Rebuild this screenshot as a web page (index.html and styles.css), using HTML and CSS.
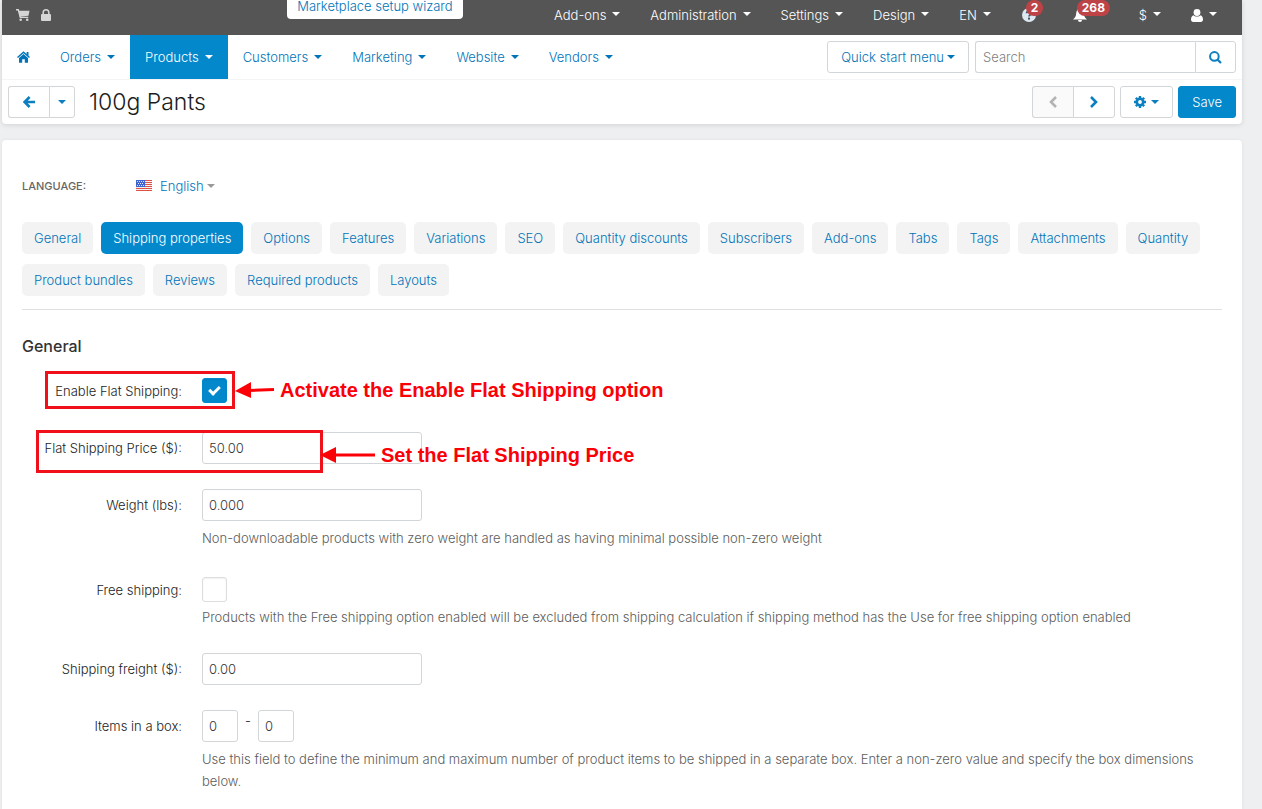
FILE: index.html
```html
<!DOCTYPE html>
<html lang="en">
<head>
<meta charset="utf-8">
<title>100g Pants</title>
<link rel="stylesheet" href="styles.css">
</head>
<body>
<div class="page">
  <header class="header">
    <div class="topbar">
      <a class="topbar-icon" href="#" aria-label="Storefront"><svg width="14" height="12" viewBox="0 0 14 12"><path d="M0 .8h2.300l2 7.600h8" fill="none" stroke="currentColor" stroke-width="1.400"/><path d="M2.500 1.800h11l-1 5-8.700.9z" fill="currentColor"/><circle cx="4.700" cy="10.700" r="1.300" fill="currentColor"/><circle cx="11.200" cy="10.700" r="1.300" fill="currentColor"/></svg></a>
      <a class="topbar-icon" href="#" aria-label="Store access"><svg width="10" height="12" viewBox="0 0 10 12"><path d="M2.200 6V3.600a2.800 2.800 0 0 1 5.600 0V6" fill="none" stroke="currentColor" stroke-width="1.500"/><rect x="0" y="5" width="10" height="7" rx="1" fill="currentColor"/></svg></a>
      <a class="wizard" href="#">Marketplace setup wizard</a>
      <nav class="topmenu" aria-label="Administration">
        <a href="#">Add-ons<span class="caret"></span></a>
        <a href="#">Administration<span class="caret"></span></a>
        <a href="#">Settings<span class="caret"></span></a>
        <a href="#">Design<span class="caret"></span></a>
        <a href="#">EN<span class="caret"></span></a>
        <a class="alerts help" href="#" aria-label="Help"><svg width="14" height="14" viewBox="0 0 14 14"><circle cx="7" cy="7" r="7" fill="#dce9f2"/><path d="M4.600 5.200C4.700 2.600 9.400 2.700 9.300 5.200 9.200 6.700 7.100 6.700 7 8.500" fill="none" stroke="#456" stroke-width="1.800"/><rect x="6" y="9.600" width="2" height="2" fill="#456"/></svg><span class="badge">2</span></a>
        <a class="alerts bell" href="#" aria-label="Notifications"><svg width="14" height="14" viewBox="0 0 14 14"><path d="M7 0C3.500 1 3.400 4 3 7c-.3 2-1.600 3-3 4.500h14C12.600 10 11.300 9 11 7 10.600 4 10.500 1 7 0zM5 12a2 2 0 0 0 4 0z" fill="currentColor"/></svg><span class="badge">268</span></a>
        <a href="#">$<span class="caret"></span></a>
        <a href="#" aria-label="Account"><svg width="12" height="13" viewBox="0 0 12 13"><circle cx="6" cy="3.500" r="3.400" fill="currentColor"/><path d="M2.300 6.300C.7 7 0 8.600 0 10.600 0 12.200.9 13 2.200 13h7.600c1.300 0 2.200-.8 2.200-2.400 0-2-.7-3.600-2.300-4.300C8 8 4 8 2.300 6.300z" fill="currentColor"/></svg><span class="caret"></span></a>
      </nav>
    </div>
    <div class="mainbar">
      <nav class="mainmenu" aria-label="Main">
        <a href="#" aria-label="Home"><svg width="13" height="12" viewBox="0 0 13 12"><path d="M.5 6.500L6.500 1.200l6 5.300" fill="none" stroke="currentColor" stroke-width="1.400"/><path d="M9.600 1h1.900v4L9.600 3.300zM2 7l4.500-4L11 7v4.800H7.800V8.300H5.200v3.500H2z" fill="currentColor"/></svg></a>
        <a href="#">Orders<span class="caret"></span></a>
        <a class="active" href="#">Products<span class="caret"></span></a>
        <a href="#">Customers<span class="caret"></span></a>
        <a href="#">Marketing<span class="caret"></span></a>
        <a href="#">Website<span class="caret"></span></a>
        <a href="#">Vendors<span class="caret"></span></a>
      </nav>
      <button class="btn quick" type="button">Quick start menu<span class="caret"></span></button>
      <form class="search">
        <input type="text" placeholder="Search" aria-label="Search">
        <button class="btn" type="button" aria-label="Find"><svg width="13" height="13" viewBox="0 0 13 13"><circle cx="5.400" cy="5.400" r="4.300" fill="none" stroke="currentColor" stroke-width="2"/><path d="M8.500 8.500l3.500 3.500" stroke="currentColor" stroke-width="2.200"/></svg></button>
      </form>
    </div>
    <div class="titlebar">
      <div class="group">
        <button class="btn wide" type="button" aria-label="Back"><svg width="12" height="12" viewBox="0 0 12 12"><path d="M6.600 1L1.600 6l5 5M2 6h10" fill="none" stroke="currentColor" stroke-width="2.600"/></svg></button>
        <button class="btn narrow" type="button" aria-label="Back options"><span class="caret"></span></button>
      </div>
      <h1>100g Pants</h1>
      <div class="actions">
        <div class="group">
          <button class="btn wide" type="button" aria-label="Previous" disabled><svg width="10" height="12" viewBox="0 0 10 12"><path d="M8 1L3 6l5 5" fill="none" stroke="currentColor" stroke-width="2.600"/></svg></button>
          <button class="btn next" type="button" aria-label="Next"><svg width="10" height="12" viewBox="0 0 10 12"><path d="M2 1l5 5-5 5" fill="none" stroke="currentColor" stroke-width="2.600"/></svg></button>
        </div>
        <button class="btn gear" type="button" aria-label="Tools"><svg width="12" height="12" viewBox="0 0 12 12"><circle cx="6" cy="6" r="3.200" fill="none" stroke="currentColor" stroke-width="2.600"/><path d="M6 0v2M6 10v2M0 6h2M10 6h2M1.800 1.800l1.400 1.400M8.800 8.800l1.400 1.400M1.800 10.200l1.400-1.400M8.800 3.200l1.400-1.400" stroke="currentColor" stroke-width="2.400"/></svg><span class="caret"></span></button>
        <button class="btn primary" type="submit" form="product">Save</button>
      </div>
    </div>
  </header>

  <main class="card">
    <div class="language">
      <span class="language-label">Language:</span>
      <button class="language-pick" type="button">
        <svg class="flag" width="16" height="12" viewBox="0 0 16 12" shape-rendering="crispEdges"><rect width="16" height="11" fill="#f6f1f1"/><path d="M0 0h16v1H0zM0 2h16v1H0zM0 4h16v1H0zM0 6h16v1H0zM0 8h16v1H0zM0 10h16v1H0z" fill="#dd5146"/><rect width="9" height="7" fill="#3f63d2"/><path d="M1 1h1v1H1zM3 1h1v1H3zM5 1h1v1H5zM7 1h1v1H7zM2 3h1v1H2zM4 3h1v1H4zM6 3h1v1H6zM1 5h1v1H1zM3 5h1v1H3zM5 5h1v1H5zM7 5h1v1H7z" fill="#dfe7fb"/></svg>
        English<span class="caret"></span>
      </button>
    </div>
    <nav class="tabs" aria-label="Product sections">
      <a href="#">General</a>
      <a class="active" href="#">Shipping properties</a>
      <a href="#">Options</a>
      <a href="#">Features</a>
      <a href="#">Variations</a>
      <a href="#">SEO</a>
      <a href="#">Quantity discounts</a>
      <a href="#">Subscribers</a>
      <a href="#">Add-ons</a>
      <a href="#">Tabs</a>
      <a href="#">Tags</a>
      <a href="#">Attachments</a>
      <a href="#">Quantity</a>
      <a href="#">Product bundles</a>
      <a href="#">Reviews</a>
      <a href="#">Required products</a>
      <a href="#">Layouts</a>
    </nav>
    <h2>General</h2>
    <form class="form" id="product">
      <div class="row">
        <label for="flat">Enable Flat Shipping:</label>
        <div class="field"><input class="check" type="checkbox" id="flat" checked></div>
        <div class="mark mark-flat"></div>
        <div class="note note-flat"><svg width="40" height="16" viewBox="0 0 40 16"><path d="M14 8.500L39 7.500" stroke="#fb0007" stroke-width="3"/><path d="M0 9L16 0v16z" fill="#fb0007"/></svg>Activate the Enable Flat Shipping option</div>
      </div>
      <div class="row">
        <label for="price">Flat Shipping Price ($):</label>
        <div class="field"><input class="text" type="text" id="price" value="50.00"></div>
        <div class="mark mark-price"></div>
        <div class="note note-price"><svg width="56" height="16" viewBox="0 0 56 16"><path d="M14 8H55" stroke="#fb0007" stroke-width="3"/><path d="M0 8L16 0v16z" fill="#fb0007"/></svg>Set the Flat Shipping Price</div>
      </div>
      <div class="row">
        <label for="weight">Weight (lbs):</label>
        <div class="field"><input class="text" type="text" id="weight" value="0.000"><p class="hint">Non-downloadable products with zero weight are handled as having minimal possible non-zero weight</p></div>
      </div>
      <div class="row">
        <label for="free">Free shipping:</label>
        <div class="field"><input class="check" type="checkbox" id="free"><p class="hint">Products with the Free shipping option enabled will be excluded from shipping calculation if shipping method has the Use for free shipping option enabled</p></div>
      </div>
      <div class="row">
        <label for="freight">Shipping freight ($):</label>
        <div class="field"><input class="text" type="text" id="freight" value="0.00"></div>
      </div>
      <div class="row">
        <label for="min">Items in a box:</label>
        <div class="field">
          <div class="range"><input class="text small" type="text" id="min" value="0"><span>-</span><input class="text small" type="text" value="0" aria-label="Maximum items in a box"></div>
          <p class="hint">Use this field to define the minimum and maximum number of product items to be shipped in a separate box. Enter a non-zero value and specify the box dimensions below.</p>
        </div>
      </div>
    </form>
  </main>
</div>
</body>
</html>
```

FILE: styles.css
```css
* {
  box-sizing: border-box;
}

body {
  margin: 0;
  background: #edeff1;
  color: #1c1c1c;
  font: 300 13px/22px Inter, "Liberation Sans", sans-serif;
}

a {
  color: #0074b8;
  text-decoration: none;
}

button,
input {
  font: inherit;
  margin: 0;
}

svg {
  flex: none;
}

.page {
  margin: 0 20px 0 2px;
}

.caret {
  flex: none;
  border: 4px solid transparent;
  border-top-color: currentColor;
  border-bottom: 0;
}

/* Header */
.header {
  background: #fff;
  border-radius: 0 0 4px 4px;
  box-shadow: 0 1px 5px rgba(0, 0, 0, 0.12);
}

.topbar {
  position: relative;
  display: flex;
  align-items: center;
  height: 35px;
  padding: 0 10px 5px 14px;
  gap: 11px;
  background: #555;
}

.topbar-icon {
  display: flex;
  color: #d5d5d5;
}

.wizard {
  position: absolute;
  top: -5px;
  left: 23%;
  padding: 0 10px 2px;
  background: #fff;
  border-radius: 0 0 4px 4px;
}

.topmenu {
  display: flex;
  margin-left: auto;
}

.topmenu a {
  display: flex;
  align-items: center;
  gap: 6px;
  padding: 0 15px;
  color: #fff;
}

.topmenu .caret {
  margin-bottom: 2px;
}

.topmenu .alerts {
  position: relative;
  padding: 0 16px;
}

.topmenu .help {
  padding-right: 21px;
}

.topmenu .bell {
  padding-right: 37px;
}

.badge {
  position: absolute;
  top: -4px;
  left: 20px;
  padding: 0 5px;
  border-radius: 8px;
  background: #bd4346;
  color: #fff;
  font-size: 12px;
  font-weight: 700;
  line-height: 16px;
}

.mainbar {
  display: flex;
  align-items: center;
  gap: 6px;
  height: 45px;
  padding-right: 6px;
  border-bottom: 1px solid #f5f5f5;
}

.mainmenu {
  display: flex;
  flex: 1;
}

.mainmenu a {
  display: flex;
  align-items: center;
  gap: 6px;
  height: 44px;
  padding: 0 15px;
}

.mainmenu .active {
  background: #0388cc;
  color: #fff;
}

.btn {
  display: flex;
  align-items: center;
  justify-content: center;
  height: 32px;
  padding: 0 13px;
  border: 1px solid #d3d6d9;
  border-radius: 3px;
  background: #fff;
  color: #0b7fc0;
}

.quick {
  gap: 3px;
  color: #0074b8;
}

.search {
  display: flex;
  width: 261px;
}

.search input {
  flex: 1;
  min-width: 0;
  height: 32px;
  padding: 0 7px;
  border: 1px solid #d3d6d9;
  border-right: 0;
  border-radius: 3px 0 0 3px;
}

.search input::placeholder {
  color: #808080;
}

.search .btn {
  border-radius: 0 3px 3px 0;
}

.titlebar {
  display: flex;
  align-items: center;
  gap: 14px;
  height: 44px;
  padding: 0 6px;
}

h1 {
  margin: 0;
  font-size: 23px;
  font-weight: 300;
  line-height: 30px;
}

.group {
  display: flex;
}

.group .btn:first-child {
  border-right: 0;
  border-radius: 3px 0 0 3px;
}

.group .btn:last-child {
  border-radius: 0 3px 3px 0;
}

.wide {
  width: 41px;
}

.next {
  width: 42px;
}

.narrow {
  width: 26px;
  padding: 0;
}

.btn:disabled {
  background: #fafafa;
  color: #b3b3b3;
}

.actions {
  display: flex;
  gap: 5px;
  margin-left: auto;
}

.gear {
  gap: 5px;
}

.primary {
  border-color: #0388cc;
  background: #0388cc;
  color: #fff;
}

/* Product card */
.card {
  margin-top: 16px;
  padding: 35px 20px 18px;
  background: #fff;
  border-radius: 4px 4px 0 0;
  box-shadow: 0 0 4px rgba(0, 0, 0, 0.06);
}

.language {
  display: flex;
  align-items: center;
  margin-bottom: 25px;
}

.language-label {
  width: 114px;
  color: #666;
  font-size: 11px;
  font-weight: 500;
  text-transform: uppercase;
}

.language-pick {
  display: flex;
  align-items: center;
  padding: 0;
  border: 0;
  background: none;
  color: #0074b8;
}

.flag {
  margin-right: 8px;
}

.language-pick .caret {
  margin-left: 3px;
  color: #999;
}

.tabs {
  display: flex;
  flex-wrap: wrap;
  gap: 10px 8px;
  padding-bottom: 13px;
  border-bottom: 1px solid #dde1e4;
}

.tabs a {
  padding: 5px 12px;
  border-radius: 5px;
  background: #f3f3f3;
}

.tabs .active {
  background: #0388cc;
  color: #fff;
}

h2 {
  margin: 25px 0 18px;
  color: #333;
  font-size: 16px;
  font-weight: 500;
  line-height: 22px;
}

.form {
  display: flex;
  flex-direction: column;
  gap: 25px;
}

.row {
  position: relative;
  display: grid;
  grid-template-columns: 160px minmax(0, 1fr);
  gap: 20px;
}

.row label {
  line-height: 32px;
  text-align: right;
}

.text {
  display: block;
  width: 220px;
  height: 32px;
  padding: 0 6px;
  border: 1px solid #d3d6d9;
  border-radius: 3px;
  background: #fff;
  color: #333;
}

.small {
  width: 36px;
}

.check {
  display: block;
  width: 25px;
  height: 25px;
  margin: 3px 0 4px;
  border: 1px solid #ddd;
  border-radius: 3px;
  background: #fff;
  box-shadow: inset 0 1px 2px rgba(0, 0, 0, 0.06);
  appearance: none;
}

.check:checked {
  display: grid;
  place-items: center;
  border-color: #0388cc;
  background: #0388cc;
}

.check:checked::before {
  content: "";
  box-sizing: border-box;
  width: 11px;
  height: 7px;
  margin-bottom: 3px;
  border: solid #fff;
  border-width: 0 0 3px 3px;
  transform: rotate(-45deg);
}

.hint {
  margin: 0;
  color: #5c5c5c;
}

.text + .hint,
.range + .hint {
  margin-top: 6px;
}

.range {
  display: flex;
  gap: 7px;
}

/* Callouts drawn over the form */
.mark {
  position: absolute;
  border: 3px solid #f0101a;
  pointer-events: none;
}

.mark-flat {
  top: -4px;
  left: 23px;
  width: 190px;
  height: 38px;
}

.mark-price {
  top: -2px;
  left: 14px;
  width: 287px;
  height: 43px;
}

.note {
  position: absolute;
  display: flex;
  align-items: center;
  gap: 5px;
  color: #fb0007;
  font: bold 20px/24px "Liberation Sans", Arial, sans-serif;
  pointer-events: none;
}

.note-flat {
  top: 3px;
  left: 213px;
}

.note-price {
  top: 11px;
  left: 298px;
}
```
